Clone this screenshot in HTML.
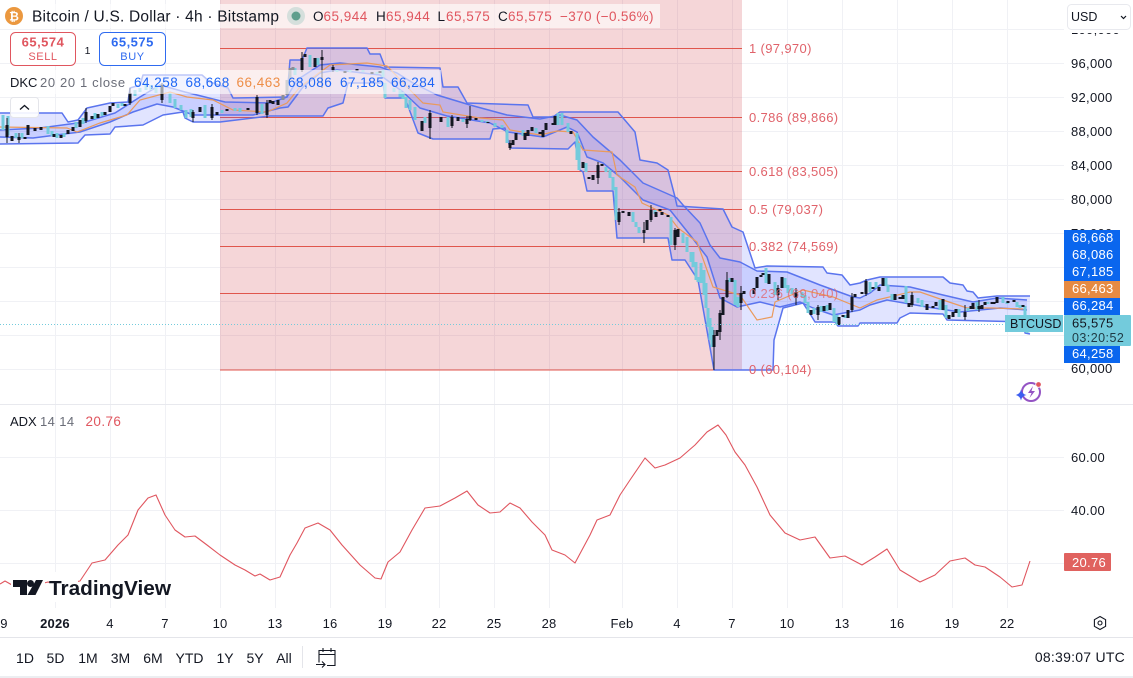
<!DOCTYPE html>
<html><head><meta charset="utf-8"><style>
html,body{margin:0;padding:0;background:#fff;width:1133px;height:678px;overflow:hidden}
svg{display:block;font-family:"Liberation Sans",sans-serif}
text{white-space:pre}
.ax{font-size:13px;fill:#131722;letter-spacing:.3px}
.fib{font-size:13px;fill:#e0626a;letter-spacing:.35px}
.t{font-size:13px;fill:#131722;text-anchor:middle;letter-spacing:.2px}
.r{font-size:14px;fill:#131722;text-anchor:middle}
.tag{font-size:13px;fill:#fff;letter-spacing:.3px}
.b{fill:#1e66f5}.red{fill:#e0565f}
</style></head><body>
<svg width="1133" height="678" viewBox="0 0 1133 678" xmlns="http://www.w3.org/2000/svg">
<defs><clipPath id="c1"><rect x="1064" y="33" width="69" height="4"/></clipPath></defs>
<rect width="1133" height="678" fill="#fff"/>
<!-- grid -->
<path stroke="#f0f1f5" stroke-width="1" fill="none" d="M0 29.500H1064M0 63.500H1064M0 97.500H1064M0 131.500H1064M0 165.500H1064M0 199.500H1064M0 233.500H1064M0 267.500H1064M0 301.500H1064M0 335.500H1064M0 369.500H1064M0 457.500H1064M0 510.500H1064M0 563.500H1064
M55.500 0V608M110.500 0V608M165.500 0V608M220.500 0V608M275.500 0V608M330.500 0V608M385.500 0V608M439.500 0V608M494.500 0V608M549.500 0V608M622.500 0V608M677.500 0V608M732.500 0V608M787.500 0V608M842.500 0V608M897.500 0V608M952.500 0V608M1007.500 0V608"/>
<!-- fib region -->
<rect x="220" y="0" width="522" height="370" fill="#cd323c" fill-opacity=".2"/>
<path stroke="#e0564c" stroke-width="1" fill="none" d="M220 48.500H742M220 117.500H742M220 171.500H742M220 209.500H742M220 246.500H742M220 293.500H742M220 370H742"/>
<!-- bands fill -->
<polygon fill="#4658ff" fill-opacity=".16" points="0,113 62,113 68,122 78,120 87,108 110,103 128,102 130,88 140,85 143,75 202,75 210,82 228,88 233,98 287,97 290,60 302,60 307,48 367,48 370,54 380,54 385,67 440,68 443,87 458,87 467,103 528,105 533,117 553,117 560,112 618,112 635,132 640,160 657,163 668,170 675,197 677,206 723,209 732,227 743,232 755,268 767,266 823,267 827,273 842,275 850,285 860,283 867,280 880,277 943,277 950,283 963,285 967,291 973,292 978,298 997,296 1030,296 1030,334 1025,333 1025,322 947,320 943,314 910,313 900,318 897,323 860,323 858,326 838,326 835,322 815,322 812,317 803,303 783,308 774,340 773,370 714,370 698,280 685,260 672,260 668,238 617,238 613,191 587,191 583,172 580,170 575,142 568,149 510,148 505,128 493,129 490,139 433,139 418,133 405,98 385,98 383,83 348,83 343,103 328,108 323,116 270,116 220,122 193,122 185,118 183,112 163,115 143,125 115,127 110,134 85,135 78,143 0,144"/>
<polygon fill="#4658ff" fill-opacity=".15" points="0,130 40,128 85,122 115,113 140,97 160,85 185,92 225,102 270,103 287,97 297,80 320,65 340,63 380,67 397,73 413,83 437,95 470,105 507,115 540,119 560,115 577,120 593,137 620,160 643,183 677,198 683,205 700,223 710,245 720,258 740,262 757,271 787,272 820,285 853,297 860,298 870,293 880,285 910,287 943,295 973,302 997,298 1027,300 1027,310 1000,308 960,312 927,307 887,300 870,305 860,310 833,315 813,308 800,302 780,307 760,302 737,307 720,298 707,257 690,235 670,210 643,200 620,177 603,163 587,157 577,132 567,127 543,137 508,132 490,123 447,116 420,108 403,92 380,75 337,70 320,73 303,87 288,107 280,108 253,115 193,115 173,107 157,104 133,112 110,122 80,132 33,138 0,137"/>
<!-- band lines -->
<g fill="none" stroke="#5a74ee" stroke-width="1.500" stroke-linejoin="round">
<polyline points="0,113 62,113 68,122 78,120 87,108 110,103 128,102 130,88 140,85 143,75 202,75 210,82 228,88 233,98 287,97 290,60 302,60 307,48 367,48 370,54 380,54 385,67 440,68 443,87 458,87 467,103 528,105 533,117 553,117 560,112 618,112 635,132 640,160 657,163 668,170 675,197 677,206 723,209 732,227 743,232 755,268 767,266 823,267 827,273 842,275 850,285 860,283 867,280 880,277 943,277 950,283 963,285 967,291 973,292 978,298 997,296 1030,296"/>
<polyline points="0,144 78,143 85,135 110,134 115,127 143,125 163,115 183,112 185,118 193,122 220,122 270,116 323,116 328,108 343,103 348,83 383,83 385,98 405,98 418,133 433,139 490,139 493,129 505,128 510,148 568,149 575,142 580,170 583,172 587,191 613,191 617,238 668,238 672,260 685,260 698,280 714,370 773,370 774,340 783,308 803,303 812,317 815,322 835,322 838,326 858,326 860,323 897,323 900,318 910,313 943,314 947,320 1025,322 1025,333 1030,334"/>
<polyline points="0,130 40,128 85,122 115,113 140,97 160,85 185,92 225,102 270,103 287,97 297,80 320,65 340,63 380,67 397,73 413,83 437,95 470,105 507,115 540,119 560,115 577,120 593,137 620,160 643,183 677,198 683,205 700,223 710,245 720,258 740,262 757,271 787,272 820,285 853,297 860,298 870,293 880,285 910,287 943,295 973,302 997,298 1027,300"/>
<polyline points="0,137 33,138 80,132 110,122 133,112 157,104 173,107 193,115 253,115 280,108 288,107 303,87 320,73 337,70 380,75 403,92 420,108 447,116 490,123 508,132 543,137 567,127 577,132 587,157 603,163 620,177 643,200 670,210 690,235 707,257 720,298 737,307 760,302 780,307 800,302 813,308 833,315 860,310 870,305 887,300 927,307 960,312 1000,308 1027,310"/>
</g>
<polyline fill="none" stroke="#ea9a5c" stroke-width="1.200" points="0,127 67,128 77,132 100,123 127,115 140,100 170,92 187,97 213,100 233,110 267,112 287,103 300,87 330,65 367,63 387,66 413,93 423,103 440,105 443,112 480,118 503,120 510,130 540,135 557,131 573,132 583,150 612,152 617,175 635,187 642,203 668,215 678,228 697,242 713,287 740,295 757,320 772,317 775,302 803,290 833,297 860,308 877,300 910,292 920,292 943,300 967,308 993,308 1023,309"/>
<!-- teal candles -->
<path fill="none" stroke="#73cbdc" stroke-width="3" d="M3 115V130M8 116V135M16 133V138M22 133V138M48 126V134M52 131V136M57 133V138M64 133V137M76 122V128M83 118V124M95 113V119M102 112V116M118 104V108M122 103V106M135 90V96M140 88V92M146 83V90M151 85V90M156 85V93M170 93V103M175 99V108M181 105V110M186 110V118M191 109V117M205 105V118M222 110V113M235 108V111M240 108V112M262 104V114M295 68V75M310 55V67M318 58V65M337 70V72M350 70V72M363 70V72M377 72V74M383 70V77M385 83V98M394 88V92M400 90V97M403 92V99M406 97V108M410 100V110M415 107V120M425 117V123M448 117V127M463 119V122M482 120V122M487 121V123M495 123V127M502 125V128M507 130V143M523 130V136M536 128V133M558 113V125M562 113V125M568 123V132M577 133V160M579 143V170M586 163V172M606 167V172M610 170V178M613 177V190M616 187V220M633 212V222M636 222V227M639 227V233M655 210V214M671 217V245M683 233V243M687 237V252M691 252V262M693 252V267M696 262V280M698 277V282M701 263V283M704 270V295M706 283V308M708 308V327M710 318V340M712 327V347M730 278V282M735 280V305M738 297V307M766 268V283M775 282V295M785 278V288M788 285V293M792 288V294M802 292V297M805 295V303M808 302V313M814 308V314M821 306V312M827 305V311M834 308V322M837 315V325M845 315V318M870 282V292M876 282V288M886 278V286M888 285V292M892 294V300M906 286V303M918 298V303M922 300V307M940 300V310M946 305V318M959 309V317M968 308V311M977 302V310M988 302V304M1003 297V303M1007 302V304M1017 302V307M1020 305V308M1025 306V315M1027 315V333"/>
<!-- black candles -->
<g fill="none" stroke="#131722">
<path stroke-width="3" d="M7 125V137M12 136V141M19 137V140M25 137V139M28 125V135M35 128V131M41 127V130M54 134V137M61 135V138M68 130V134M73 127V131M80 120V127M86 112V121M92 116V119M98 114V118M105 112V115M110 106V112M113 103V106M125 104V106M130 93V103M162 85V100M193 112V118M200 107V112M212 107V118M217 112V115M227 109V111M248 108V110M257 97V113M267 103V115M270 100V103M273 101V104M278 100V105M302 58V70M305 54V57M315 58V67M322 57V60M333 67V70M345 71V73M357 69V71M372 72V74M380 71V73M422 121V131M430 113V128M441 117V122M452 117V126M458 117V121M467 119V124M470 116V120M476 118V120M488 122V123M510 143V148M513 140V145M516 133V140M525 133V140M528 130V136M532 127V131M540 132V134M543 130V137M546 123V130M553 123V125M555 116V125M571 131V134M583 162V168M589 177V179M593 175V180M598 165V178M602 164V166M619 212V222M623 211V213M629 212V216M644 230V233M647 220V230M651 210V220M656 212V217M660 209V211M662 212V215M668 215V217M675 230V245M678 229V237M714 335V347M717 330V336M720 313V332M723 297V315M727 280V297M732 278V282M741 293V303M744 291V294M754 288V294M757 277V288M761 275V277M763 273V275M769 274V284M778 288V295M782 277V288M796 292V298M811 310V315M818 307V315M824 306V311M830 303V310M839 317V325M843 315V317M848 310V318M852 297V310M855 294V297M862 292V294M866 281V294M873 287V289M879 287V291M883 278V286M895 294V300M900 297V299M903 295V299M909 303V307M912 295V305M927 304V310M933 306V308M936 302V306M943 299V310M949 315V319M953 312V317M956 309V313M965 312V317M971 306V309M973 303V309M979 306V309M982 305V309M985 302V305M992 302V304M994 302V304M997 297V303M1008 301V303M1014 300V302M1023 305V307"/>
<path stroke-width="1" d="M7 118V143M19 133V143M86 108V123M130 88V105M162 83V103M193 110V122M212 104V120M257 95V115M267 100V118M302 52V72M322 50V88M333 65V72M430 110V139M452 115V128M467 116V128M470 106V121M510 140V150M598 162V184M619 208V225M644 222V243M651 205V222M675 228V250M714 330V370M720 310V340M727 272V298M741 286V310M778 285V300M796 288V305M818 305V320M852 293V312M866 279V296M912 292V307M965 305V320M979 300V312"/>
</g>
<!-- gray candles under legend -->
<path fill="none" stroke="#8b8e96" stroke-width="3" d="M283 95V100M287 80V95M290 68V80M293 67V70"/>
<!-- last price line -->
<path stroke="#73cbdc" stroke-width="1" stroke-dasharray="1 2" d="M0 324.500H1064"/>
<!-- legend backgrounds -->
<rect x="0" y="4" width="660" height="24" fill="#fff" fill-opacity=".6"/>
<rect x="0" y="70" width="441" height="24" fill="#fff" fill-opacity=".6"/>
<!-- fib labels -->
<text class="fib" x="749" y="53">1 (97,970)</text>
<text class="fib" x="749" y="122">0.786 (89,866)</text>
<text class="fib" x="749" y="176">0.618 (83,505)</text>
<text class="fib" x="749" y="214">0.5 (79,037)</text>
<text class="fib" x="749" y="251">0.382 (74,569)</text>
<text class="fib" x="749" y="298" fill-opacity=".75">0.236 (69,040)</text>
<text class="fib" x="749" y="374">0 (60,104)</text>
<!-- header -->
<circle cx="14" cy="16" r="9" fill="#eb983f"/>
<text x="14" y="20.500" font-size="12" font-weight="700" fill="#fff" text-anchor="middle">₿</text>
<text x="32" y="21.500" font-size="15.500" fill="#131722" textLength="247" lengthAdjust="spacing">Bitcoin / U.S. Dollar · 4h · Bitstamp</text>
<circle cx="296" cy="16" r="9" fill="#d5dfdc"/>
<circle cx="296" cy="16" r="4.500" fill="#5f9f8d"/>
<g font-size="13.500" letter-spacing=".5">
<text x="313" y="21" fill="#131722">O</text><text x="323.500" y="21" class="red">65,944</text>
<text x="376" y="21" fill="#131722">H</text><text x="386" y="21" class="red">65,944</text>
<text x="437.500" y="21" fill="#131722">L</text><text x="446" y="21" class="red">65,575</text>
<text x="498" y="21" fill="#131722">C</text><text x="508" y="21" class="red">65,575</text>
<text x="560" y="21" class="red" textLength="94">−370 (−0.56%)</text>
</g>
<!-- sell buy -->
<rect x="10.500" y="32.500" width="65" height="33" rx="5" fill="#fff" stroke="#e0565f"/>
<text x="43" y="46.500" font-size="13" font-weight="700" class="red" text-anchor="middle" letter-spacing=".5">65,574</text>
<text x="43" y="60" font-size="11" class="red" text-anchor="middle" letter-spacing=".6">SELL</text>
<text x="87.500" y="54" font-size="10.500" fill="#131722" text-anchor="middle">1</text>
<rect x="99.500" y="32.500" width="66" height="33" rx="5" fill="#fff" stroke="#2f6bf0"/>
<text x="132.500" y="46.500" font-size="13" font-weight="700" fill="#2f6bf0" text-anchor="middle" letter-spacing=".5">65,575</text>
<text x="132.500" y="60" font-size="11" fill="#2f6bf0" text-anchor="middle" letter-spacing=".6">BUY</text>
<!-- DKC legend -->
<text x="10" y="87" font-size="13" fill="#131722">DKC</text>
<text x="40" y="87" font-size="13" fill="#6a6d78" letter-spacing=".65">20 20 1 close</text>
<g font-size="13.500" letter-spacing=".5">
<text x="134" y="87" class="b">64,258</text>
<text x="185.500" y="87" class="b">68,668</text>
<text x="236.500" y="87" fill="#ee8e48">66,463</text>
<text x="288" y="87" class="b">68,086</text>
<text x="340" y="87" class="b">67,185</text>
<text x="391" y="87" class="b">66,284</text>
</g>
<rect x="10.500" y="97.500" width="28" height="20" rx="3" fill="#fff" fill-opacity=".9" stroke="#e4e5ea"/>
<path d="M20 109.500l4.500-4 4.500 4" fill="none" stroke="#131722" stroke-width="1.300"/>
<!-- axis -->
<rect x="1064" y="0" width="69" height="404" fill="#fff"/>
<text class="ax" x="1071" y="34" clip-path="url(#c1)">100,000</text>
<text class="ax" x="1071" y="68">96,000</text>
<text class="ax" x="1071" y="102">92,000</text>
<text class="ax" x="1071" y="136">88,000</text>
<text class="ax" x="1071" y="170">84,000</text>
<text class="ax" x="1071" y="204">80,000</text>
<text class="ax" x="1071" y="238">76,000</text>
<text class="ax" x="1071" y="373">60,000</text>
<rect x="1067.500" y="4.500" width="63" height="25" rx="4" fill="#fff" stroke="#e8e9ee"/>
<text x="1071" y="21" font-size="12.500" fill="#131722">USD</text>
<path d="M1121 16l2.500 2.500 2.500-2.500" fill="none" stroke="#131722" stroke-width="1.200"/>
<!-- tags -->
<rect x="1064" y="230" width="56" height="68" fill="#0a66ee"/>
<rect x="1064" y="281" width="56" height="17" fill="#e68a42"/>
<rect x="1064" y="298" width="56" height="17" fill="#0a66ee"/>
<rect x="1064" y="346" width="56" height="17" fill="#0a66ee"/>
<rect x="1064" y="315" width="67" height="31" rx="1" fill="#73cbdc"/>
<rect x="1005" y="315" width="58" height="17" fill="#73cbdc"/>
<text class="tag" x="1072" y="242">68,668</text>
<text class="tag" x="1072" y="259">68,086</text>
<text class="tag" x="1072" y="276">67,185</text>
<text class="tag" x="1072" y="293">66,463</text>
<text class="tag" x="1072" y="310">66,284</text>
<text class="tag" x="1072" y="358">64,258</text>
<text x="1010" y="328" font-size="12.500" fill="#131722">BTCUSD</text>
<text x="1072" y="327.500" font-size="13" fill="#131722" letter-spacing=".3">65,575</text>
<text x="1072" y="342" font-size="12.500" fill="#1f3a44" letter-spacing=".45">03:20:52</text>
<!-- lightning icon -->
<circle cx="1031" cy="392" r="9" fill="none" stroke="#9454c4" stroke-width="2"/>
<path d="M1033 386l-5 7h3.500l-2 5 5.500-7h-3.500z" fill="#9454c4"/>
<circle cx="1038.500" cy="384.500" r="2.800" fill="#e0565f" stroke="#fff" stroke-width=".8"/>
<path d="M1021 389.500q.9 4.600 5.500 5.500q-4.600.9-5.500 5.500q-.9-4.600-5.500-5.500q4.600-.9 5.500-5.500z" fill="#3d5ef0"/>
<!-- pane divider -->
<path stroke="#e8e9ee" d="M0 404.500H1133"/>
<!-- ADX -->
<text x="10" y="426" font-size="13" fill="#131722">ADX</text>
<text x="40" y="426" font-size="13" fill="#6a6d78" letter-spacing=".4">14 14</text>
<text x="85.500" y="426" font-size="13.500" class="red" letter-spacing=".4">20.76</text>
<polyline fill="none" stroke="#e0565f" stroke-width="1.100" stroke-linejoin="round" points="0,584 5,581 12,585 18,584 32,586 48,582 60,585 80,581 92,563 105,560 118,545 128,535 138,510 148,498 156,495 165,515 175,530 185,537 195,536 207,545 220,555 235,565 245,570 255,576 260,574 270,580 280,577 290,555 297,543 305,528 318,523 330,530 342,545 360,565 375,578 381,579 388,562 400,552 412,530 425,508 440,506 455,498 467,491 478,505 490,513 500,512 510,503 520,508 532,522 545,535 552,550 565,555 575,563 590,535 597,520 610,515 620,495 630,480 645,458 655,468 665,465 680,458 695,445 707,432 718,425 726,435 735,452 745,465 757,487 770,515 785,533 800,540 815,537 830,558 845,556 862,565 875,557 887,549 900,570 920,582 935,575 950,561 965,558 975,565 985,567 1000,577 1012,587 1022,585 1030,561"/>
<rect x="11" y="572" width="34" height="30" fill="#fff"/>
<rect x="50" y="572" width="28" height="30" fill="#fff"/>
<rect x="1064" y="405" width="69" height="203" fill="#fff"/>
<text class="ax" x="1071" y="462">60.00</text>
<text class="ax" x="1071" y="515">40.00</text>
<rect x="1064" y="553" width="47" height="18" rx="1" fill="#e0625f"/>
<text class="tag" x="1072" y="567">20.76</text>
<!-- logo -->
<path d="M13 580H27V595H20V587H13z" fill="#131722"/>
<circle cx="30.500" cy="583.500" r="3.500" fill="#131722"/>
<path d="M36 580H43L35.500 595H27.500z" fill="#131722"/>
<text x="49" y="595" font-size="20.500" font-weight="700" fill="#131722" textLength="122" lengthAdjust="spacingAndGlyphs">TradingView</text>
<!-- time axis -->
<rect x="0" y="608" width="1133" height="29" fill="#fff"/>
<path stroke="#e4e5ea" d="M0 637.500H1133"/>
<g>
<text class="t" x="4" y="628">9</text>
<text class="t" x="55" y="628" font-weight="700" letter-spacing=".5">2026</text>
<text class="t" x="110" y="628">4</text><text class="t" x="165" y="628">7</text>
<text class="t" x="220" y="628">10</text><text class="t" x="275" y="628">13</text>
<text class="t" x="330" y="628">16</text><text class="t" x="385" y="628">19</text>
<text class="t" x="439" y="628">22</text><text class="t" x="494" y="628">25</text>
<text class="t" x="549" y="628">28</text><text class="t" x="622" y="628">Feb</text>
<text class="t" x="677" y="628">4</text><text class="t" x="732" y="628">7</text>
<text class="t" x="787" y="628">10</text><text class="t" x="842" y="628">13</text>
<text class="t" x="897" y="628">16</text><text class="t" x="952" y="628">19</text>
<text class="t" x="1007" y="628">22</text>
</g>
<path d="M1100 616.500l5.600 3.200v6.600l-5.600 3.200-5.600-3.200v-6.600z" fill="none" stroke="#131722" stroke-width="1.100"/>
<circle cx="1100" cy="623" r="2" fill="none" stroke="#131722" stroke-width="1.100"/>
<!-- range bar -->
<g>
<text class="r" x="25" y="663">1D</text><text class="r" x="55.500" y="663">5D</text>
<text class="r" x="88" y="663">1M</text><text class="r" x="120.500" y="663">3M</text>
<text class="r" x="153" y="663">6M</text><text class="r" x="189.500" y="663">YTD</text>
<text class="r" x="225" y="663">1Y</text><text class="r" x="255" y="663">5Y</text>
<text class="r" x="284" y="663">All</text>
</g>
<path stroke="#e4e5ea" d="M302.500 646V668"/>
<path d="M319 662.500V650.500H335V665.500H327M319 654.500H335M323 648V652M331 648V652M316 664.500H325M322 661.500l3 3-3 3" fill="none" stroke="#131722" stroke-width="1.100"/>
<text x="1125" y="662" font-size="14" fill="#131722" text-anchor="end" letter-spacing=".25">08:39:07 UTC</text>
<rect x="0" y="676" width="1133" height="2" fill="#eceef1"/>
</svg>
</body></html>
